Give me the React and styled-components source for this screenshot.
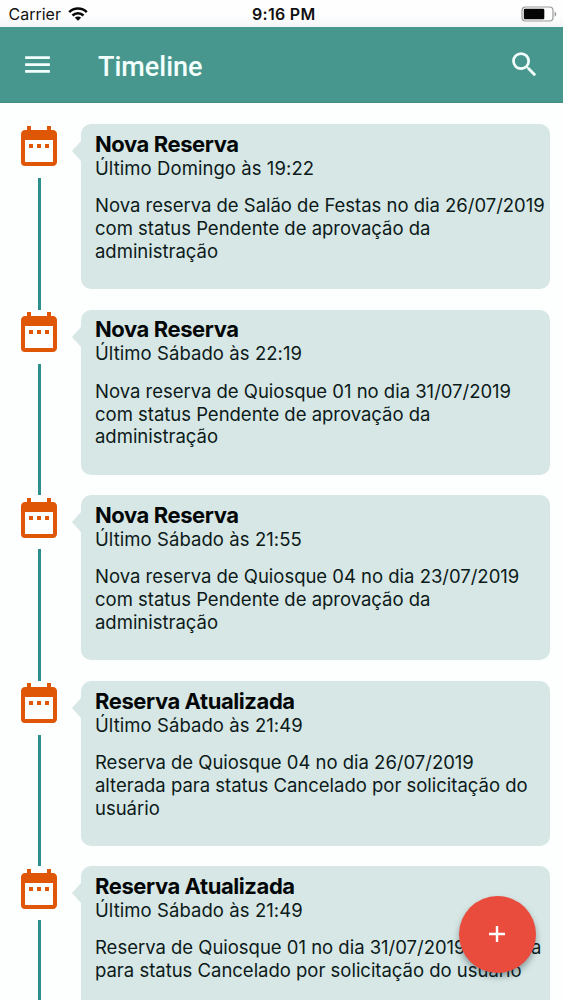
import React from 'react';
import styled, { createGlobalStyle } from 'styled-components';
import { MdDateRange, MdMenu, MdSearch } from 'react-icons/md';

const GlobalStyle = createGlobalStyle`
  * {
    box-sizing: border-box;
  }
  body {
    margin: 0;
    background: #fdfefe;
    font-family: Inter, 'Liberation Sans', sans-serif;
    color: #0c1a1a;
  }
`;

const Screen = styled.div`
  display: flex;
  flex-direction: column;
  height: 1000px;
  overflow: hidden;
`;

const StatusBar = styled.div`
  display: grid;
  grid-template-columns: 1fr auto 1fr;
  align-items: center;
  flex-shrink: 0;
  height: 27px;
  padding: 2px 6px 0 8.5px;
  background: linear-gradient(#fefefe 60%, #f3f5f7);
  font-size: 16px;
  line-height: 20px;
  color: #111;
`;

const Carrier = styled.div`
  display: flex;
  align-items: center;
  gap: 7px;
  margin-top: -1px;
  svg {
    margin-top: -1px;
  }
`;

const Clock = styled.div`
  margin: -1px -1px 0 1px;
  font-weight: 600;
  letter-spacing: 0.28px;
`;

const Battery = styled.svg`
  justify-self: end;
  margin-top: -2px;
`;

const Header = styled.header`
  display: flex;
  align-items: center;
  flex-shrink: 0;
  height: 76px;
  padding: 0 22px 0 21px;
  background: #47978e;
  border-bottom: 1px solid #438c82;
  color: #f3fffd;
  svg {
    width: 33px;
    height: 33px;
  }
`;

const HeaderTitle = styled.h1`
  flex: 1;
  margin: 4px 0 0 44px;
  font-family: Roboto, sans-serif;
  font-size: 27px;
  font-weight: 500;
  line-height: 32px;
`;

const List = styled.main`
  flex: 1;
  min-height: 0;
  overflow: hidden;
  padding: 21px 13px 0 15px;
`;

const Item = styled.div`
  display: flex;
  height: 185.6px;
`;

const Rail = styled.div`
  display: flex;
  flex-direction: column;
  align-items: center;
  width: 48px;
  margin-right: 18px;
  color: #e05607;
  svg {
    flex-shrink: 0;
    width: 48px;
    height: 48px;
    margin: -1.7px 0 7.7px;
  }
`;

const Line = styled.div`
  flex: 1;
  width: 3px;
  background: #2d908d;
`;

const Card = styled.article`
  position: relative;
  flex: 1;
  height: 165px;
  padding: 7.8px 0 0 14px;
  border-radius: 10px;
  background: #d7e7e5;
  &::before {
    content: '';
    position: absolute;
    top: 17px;
    left: -9px;
    border: solid transparent;
    border-width: 10px 9px 10px 0;
    border-right-color: #d7e7e5;
  }
`;

const CardTitle = styled.h2`
  margin: 0;
  font-size: 22px;
  font-weight: 700;
  line-height: 25px;
  letter-spacing: -0.42px;
  color: #030708;
`;

const When = styled.div`
  font-size: 18.5px;
  line-height: 23.9px;
  letter-spacing: 0.07px;
`;

const Message = styled.p`
  margin: 13.3px 0 0;
  font-size: 18.5px;
  line-height: 22.9px;
  letter-spacing: -0.015px;
  white-space: pre;
`;

const Fab = styled.button`
  position: absolute;
  left: 459px;
  top: 896px;
  display: flex;
  align-items: center;
  justify-content: center;
  width: 77px;
  height: 77px;
  padding: 0 1px 1px 0;
  border: 0;
  border-radius: 50%;
  background: #e94b3c;
  color: #fff;
  box-shadow: 0 4px 6px rgba(20, 50, 60, 0.4);
`;

const entries = [
  {
    title: 'Nova Reserva',
    when: 'Último Domingo às 19:22',
    text: 'Nova reserva de Salão de Festas no dia 26/07/2019\ncom status Pendente de aprovação da\nadministração',
  },
  {
    title: 'Nova Reserva',
    when: 'Último Sábado às 22:19',
    text: 'Nova reserva de Quiosque 01 no dia 31/07/2019\ncom status Pendente de aprovação da\nadministração',
  },
  {
    title: 'Nova Reserva',
    when: 'Último Sábado às 21:55',
    text: 'Nova reserva de Quiosque 04 no dia 23/07/2019\ncom status Pendente de aprovação da\nadministração',
  },
  {
    title: 'Reserva Atualizada',
    when: 'Último Sábado às 21:49',
    text: 'Reserva de Quiosque 04 no dia 26/07/2019\nalterada para status Cancelado por solicitação do\nusuário',
  },
  {
    title: 'Reserva Atualizada',
    when: 'Último Sábado às 21:49',
    text: 'Reserva de Quiosque 01 no dia 31/07/2019 alterada\npara status Cancelado por solicitação do usuário',
  },
];

const WifiIcon = () => (
  <svg width='20' height='14' viewBox='0 0 20 14'>
    <g fill='none' stroke='#080808' strokeWidth='2.5'>
      <path d='M1.2 5.2a12.4 12.4 0 0 1 17.6 0' />
      <path d='M4.5 8.5a7.8 7.8 0 0 1 11 0' />
    </g>
    <path d='M6.9 10.7a4.4 4.4 0 0 1 6.2 0L10 13.8z' fill='#080808' />
  </svg>
);

const PlusIcon = () => (
  <svg width='16' height='16' viewBox='0 0 16 16'>
    <path d='M8 0v16M0 8h16' stroke='currentColor' strokeWidth='2.4' />
  </svg>
);

const App = () => {
  return (
    <Screen>
      <GlobalStyle />
      <StatusBar>
        <Carrier>
          Carrier
          <WifiIcon />
        </Carrier>
        <Clock>9:16 PM</Clock>
        <Battery width='36' height='16' viewBox='0 0 36 16'>
          <rect x='1' y='1' width='31' height='14' rx='3.5' fill='none' stroke='#999' strokeWidth='1.2' />
          <rect x='2.8' y='2.8' width='20.5' height='10.4' rx='1.2' fill='#050505' />
          <path d='M33.6 5.4c2.2 1 2.2 4.2 0 5.2z' fill='#999' />
        </Battery>
      </StatusBar>
      <Header>
        <MdMenu />
        <HeaderTitle>Timeline</HeaderTitle>
        <MdSearch />
      </Header>
      <List>
        {entries.map((entry, i) => (
          <Item key={i}>
            <Rail>
              <MdDateRange />
              <Line />
            </Rail>
            <Card>
              <CardTitle>{entry.title}</CardTitle>
              <When>{entry.when}</When>
              <Message>{entry.text}</Message>
            </Card>
          </Item>
        ))}
      </List>
      <Fab aria-label='Adicionar'>
        <PlusIcon />
      </Fab>
    </Screen>
  );
};

export default App;
